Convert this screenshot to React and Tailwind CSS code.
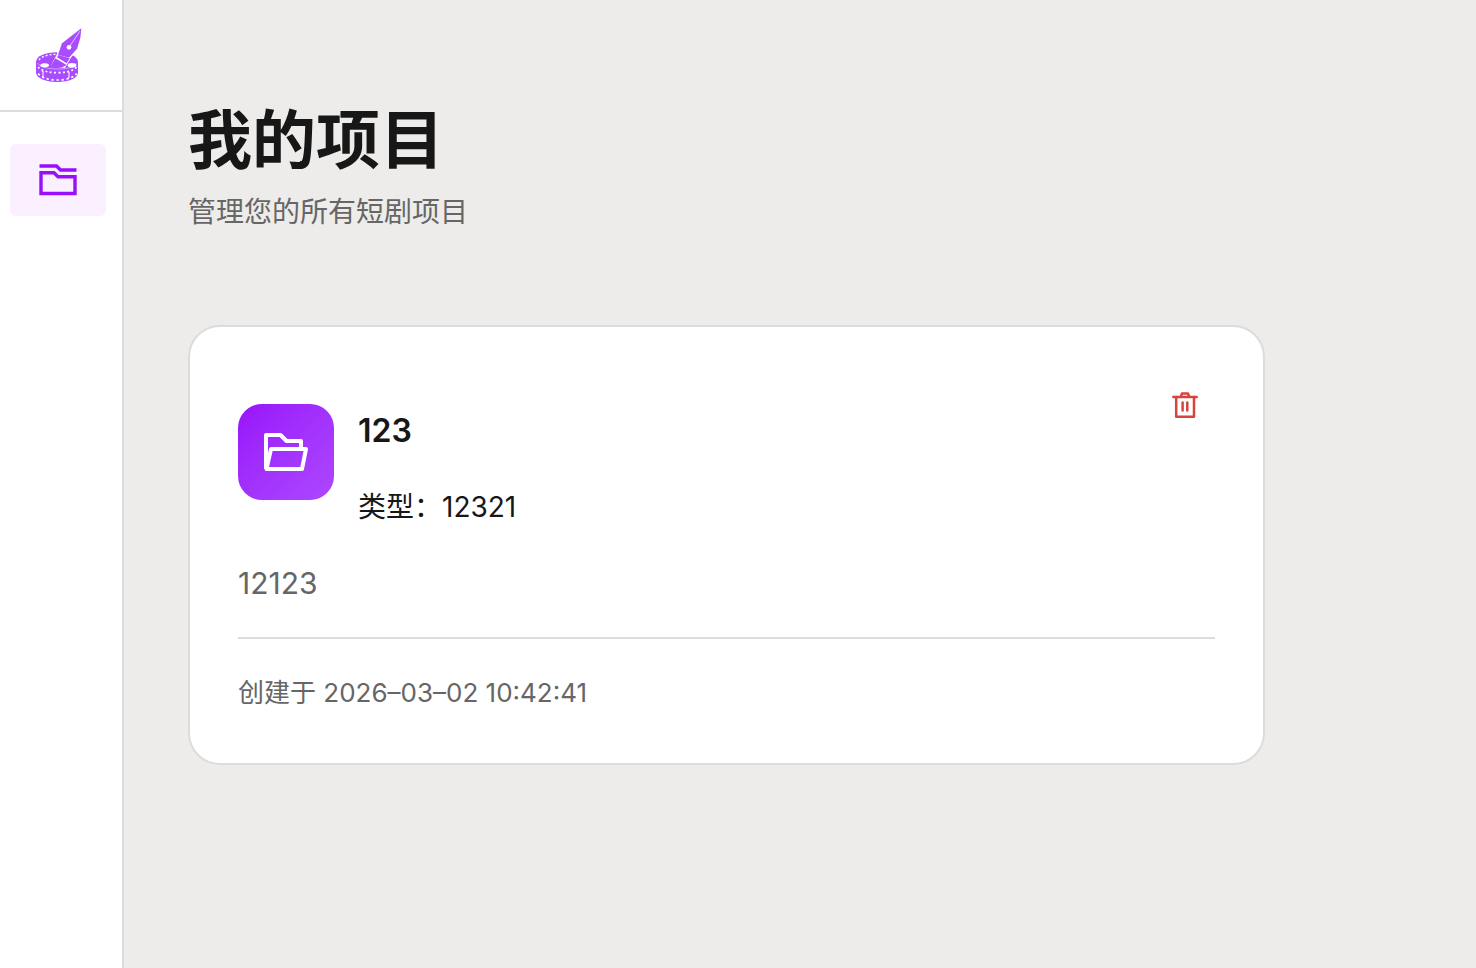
import { useState } from 'react';

const initialProjects = [
  {
    id: 1,
    name: '123',
    genre: '12321',
    description: '12123',
    createdAt: '2026–03–02 10:42:41',
  },
];

function Logo() {
  return (
    <svg viewBox="0 0 180 198" className="h-[66px] w-[60px]" aria-hidden="true">
      {/* film reel */}
      <path
        d="M18 121 C18 102 46 91 82 91 C118 91 144 103 144 121 L144 151 C144 169 118 180 81 180 C44 180 18 168 18 151 Z"
        fill="#a94bff"
      />
      <path d="M22 129 C32 142 54 147 82 147 C110 147 134 142 141 130" fill="none" stroke="#e2c4ff" strokeWidth="2" transform="translate(0 -6)" />
      <path d="M24 135 C38 148 58 152 82 152 C106 152 128 148 140 135" fill="none" stroke="#fff" strokeWidth="5" strokeDasharray="6 7" />
      <path d="M24 155 C38 169 58 174 82 174 C106 174 128 169 140 155" fill="none" stroke="#fff" strokeWidth="5" strokeDasharray="7 8" />
      <path d="M35 147 H39 V167 H43 M113 150 H117 V168 H113" fill="none" stroke="#fff" strokeWidth="3" />
      <path d="M27 114 C36 102 56 97 80 97" fill="none" stroke="#fff" strokeWidth="4" strokeDasharray="6 6" />
      <ellipse cx="44" cy="130" rx="13" ry="6" fill="#fff" />
      <ellipse cx="126" cy="130" rx="13" ry="7" fill="#fff" />
      {/* pen nib */}
      <path d="M62 132 L80 98 L92 58 L153 16 L146 74 L121 110 L105 138 Z" fill="#fff" />
      <path d="M62 132 L76 109 L110 129 C98 138 76 139 62 132 Z" fill="#a94bff" />
      <path d="M81 106 L86 99 L119 109 L110 124 Z" fill="#a94bff" />
      <path d="M154 19 L151 48 L141 80 L117 107 L84 98 L96 64 L123 43 Z" fill="#a94bff" />
      <path d="M117 76 L150 27" stroke="#fff" strokeWidth="2" />
      <circle cx="117" cy="76" r="7" fill="#fff" />
    </svg>
  );
}

function FoldersIcon() {
  return (
    <svg viewBox="0 0 38 32" className="h-8 w-[38px]" fill="none" stroke="currentColor" strokeWidth="3.4" aria-hidden="true">
      <path d="M0.5 2 H17.5 L21.5 6 H37.5" />
      <path d="M2 8.7 H15 L19 12.7 H36 V29.5 H2 Z" />
    </svg>
  );
}

function FolderOpenIcon() {
  return (
    <svg
      viewBox="0 0 44 38"
      className="h-[38px] w-11"
      fill="none"
      stroke="currentColor"
      strokeWidth="4"
      strokeLinejoin="round"
      aria-hidden="true"
    >
      <path d="M2 36 V2 H16.5 L22.5 8 H37 V16" />
      <path d="M2.5 36 L7 16 H42 L38 36 Z" />
    </svg>
  );
}

function TrashIcon() {
  return (
    <svg
      viewBox="0 0 26 26"
      className="size-[26px]"
      fill="none"
      stroke="currentColor"
      strokeWidth="2.5"
      strokeLinecap="round"
      strokeLinejoin="round"
      aria-hidden="true"
    >
      <path d="M1.3 4.9 H24.7" />
      <path d="M9 4.5 L10 1.4 H16 L17 4.5" />
      <path d="M4.2 5 V24.7 H22 V5" />
      <path d="M10.6 10.5 V18.5 M15.3 10.5 V18.5" />
    </svg>
  );
}

function ProjectCard({ project, onDelete }) {
  return (
    <article className="rounded-[32px] border-2 border-[#dcdcdc] bg-white p-12">
      <div className="flex items-start gap-6">
        <div className="mt-[29px] flex size-24 shrink-0 items-center justify-center rounded-3xl bg-linear-to-br from-[#9810fa] to-[#ad46ff] text-white">
          <FolderOpenIcon />
        </div>
        <div className="mt-8 min-w-0 flex-1">
          <h2 className="truncate text-[32px] leading-[48px] font-semibold">{project.name}</h2>
          <p className="mt-8 text-[28px] leading-10">类型：{project.genre}</p>
        </div>
        <button
          type="button"
          aria-label="删除"
          onClick={() => onDelete(project.id)}
          className="mt-1 mr-1 flex size-[52px] cursor-pointer items-center justify-center text-[#d6453d]"
        >
          <TrashIcon />
        </button>
      </div>
      <p className="mt-8 text-[30px] leading-[48px] text-[#666]">{project.description}</p>
      <div className="mt-[30px] border-t-2 border-[#dcdcdc] pt-8 text-[26px] leading-[44px] text-[#666]">
        创建于 {project.createdAt}
      </div>
    </article>
  );
}

export default function App() {
  const [projects, setProjects] = useState(initialProjects);

  const handleDelete = (id) => {
    setProjects(projects.filter((p) => p.id !== id));
  };

  return (
    <div className="flex min-h-screen bg-[#edecea] font-['Inter','Noto_Sans_CJK_SC',sans-serif] text-[#171717]">
      <aside className="w-[124px] shrink-0 border-r-2 border-[#dcdcdc] bg-white">
        <div className="flex h-28 items-center border-b-2 border-[#dcdcdc] pl-[30px]">
          <Logo />
        </div>
        <nav className="py-8 pr-4 pl-[10px]">
          <a
            href="#projects"
            aria-label="我的项目"
            className="flex h-[72px] items-center justify-center rounded-md bg-[#faf0ff] text-[#9810fa]"
          >
            <FoldersIcon />
          </a>
        </nav>
      </aside>

      <main id="projects" className="min-w-0 flex-1 py-24 pr-[211px] pl-16">
        <header>
          <h1 className="text-[64px] leading-[88px] font-bold">我的项目</h1>
          <p className="mt-2 text-[28px] leading-10 text-[#666]">管理您的所有短剧项目</p>
        </header>
        <section className="mt-[93px] flex flex-col gap-8">
          {projects.map((project) => (
            <ProjectCard key={project.id} project={project} onDelete={handleDelete} />
          ))}
        </section>
      </main>
    </div>
  );
}
